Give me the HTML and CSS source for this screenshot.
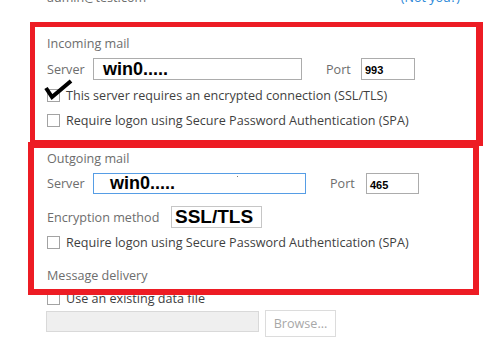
FILE: index.html
```html
<!DOCTYPE html>
<html>
<head>
    <meta charset="UTF-8">
    <link rel="stylesheet" href="styles.css">
</head>
<body>
    <div class="dialog">
        <div class="account-row">
            <span class="account">admin@test.com</span>
            <span class="not-you">(Not you?)</span>
        </div>

        <div class="section-title title-incoming">Incoming mail</div>
        <div class="field-row row-in-server">
            <span class="label label-server">Server</span>
            <div class="input server-input">win0.....</div>
            <span class="label label-port">Port</span>
            <div class="input port-input">993</div>
        </div>
        <div class="check-row row-ssl">
            <span class="checkbox"></span>
            <span class="check-text">This server requires an encrypted connection (SSL/TLS)</span>
        </div>
        <div class="check-row row-spa-in">
            <span class="checkbox"></span>
            <span class="check-text">Require logon using Secure Password Authentication (SPA)</span>
        </div>

        <div class="section-title title-outgoing">Outgoing mail</div>
        <div class="field-row row-out-server">
            <span class="label label-server">Server</span>
            <div class="input server-input out focused">win0.....<span class="speck"></span></div>
            <span class="label label-port out">Port</span>
            <div class="input port-input out">465</div>
        </div>
        <div class="field-row row-enc">
            <span class="label label-enc">Encryption method</span>
            <div class="enc-box">SSL/TLS</div>
        </div>
        <div class="check-row row-spa-out">
            <span class="checkbox"></span>
            <span class="check-text">Require logon using Secure Password Authentication (SPA)</span>
        </div>

        <div class="section-title title-delivery">Message delivery</div>
        <div class="check-row row-datafile">
            <span class="checkbox"></span>
            <span class="check-text">Use an existing data file</span>
        </div>
        <div class="file-row">
            <div class="file-input"></div>
            <div class="browse-btn">Browse...</div>
        </div>
    </div>

    <!-- annotations drawn over the dialog -->
    <div class="mark-box box-incoming"></div>
    <div class="mark-box box-outgoing"></div>
    <svg class="tick" width="30" height="24" viewBox="0 0 30 24">
        <path d="M2 10 L8 19 L27 3" fill="none" stroke="#000" stroke-width="4" stroke-linejoin="miter"/>
    </svg>
</body>
</html>
```

FILE: styles.css
```css
body {
    margin: 0;
    background: #fff;
    font-family: "Open Sans", "Noto Sans", Arial, sans-serif;
    font-size: 12.6px;
    color: #6d6d6d;
    overflow: hidden;
}
.dialog {
    padding-left: 47px;
}
.account-row {
    display: flex;
    justify-content: space-between;
    width: 413px;
    height: 16px;
    line-height: 16px;
    margin-top: -10px;
}
.account {
    color: #6d6d6d;
}
.not-you {
    color: #2b88d8;
}
.section-title {
    height: 16px;
    line-height: 16px;
}
.title-incoming { margin-top: 30px; }
.title-outgoing { margin-top: 21px; }
.title-delivery { margin-top: 16px; }

.field-row {
    display: flex;
    align-items: center;
}
.row-in-server { margin-top: 6px; height: 22px; }
.row-out-server { margin-top: 6px; height: 21px; }
.row-enc { margin-top: 12px; height: 22px; }

.label-server { width: 46px; }
.label-port { width: 35px; margin-left: 24px; }
.label-port.out { width: 36px; margin-left: 24px; }
.label-enc { width: 124px; }

.input {
    box-sizing: border-box;
    height: 100%;
    border: 1px solid #acacac;
    background: #fff;
    color: #000;
    font-family: "Liberation Sans", Arial, sans-serif;
    font-weight: bold;
    display: flex;
    align-items: center;
    position: relative;
}
.server-input {
    width: 209px;
    padding-left: 9px;
    font-size: 18px;
}
.server-input.out {
    width: 213px;
    padding-left: 16px;
}
.server-input.focused {
    border-color: #569de5;
}
.speck {
    position: absolute;
    left: 143px;
    top: 2px;
    width: 1px;
    height: 1px;
    background: #777;
}
.port-input {
    width: 54px;
    padding-left: 3px;
    padding-top: 2px;
    font-size: 11px;
}
.port-input.out {
    width: 53px;
}
.enc-box {
    box-sizing: border-box;
    width: 91px;
    height: 22px;
    border: 1px solid #c6c6c6;
    padding-left: 3px;
    color: #000;
    font-family: "Liberation Sans", Arial, sans-serif;
    font-weight: bold;
    font-size: 19px;
    line-height: 20px;
}

.check-row {
    display: flex;
    align-items: center;
    height: 20px;
}
.row-ssl { margin-top: 5px; }
.row-spa-in { margin-top: 5px; }
.row-spa-out { margin-top: 4px; }
.row-datafile { margin-top: 4px; }

.checkbox {
    box-sizing: border-box;
    width: 13px;
    height: 13px;
    border: 1px solid #a3a3a3;
    background: #fff;
    margin-right: 6px;
}
.check-text {
    color: #3f3f3f;
}

.file-row {
    display: flex;
    align-items: flex-start;
    gap: 6px;
    margin-top: 2px;
    margin-left: -1px;
}
.file-input {
    box-sizing: border-box;
    width: 213px;
    height: 21px;
    margin-top: 1px;
    background: #efefef;
    border: 1px solid #d9d9d9;
}
.browse-btn {
    box-sizing: border-box;
    width: 71px;
    height: 27px;
    border: 1px solid #dcdcdc;
    background: #fff;
    color: #a8a8a8;
    display: flex;
    align-items: center;
    justify-content: center;
}

.mark-box {
    position: absolute;
    box-sizing: border-box;
    border-style: solid;
    border-color: #ed1c24;
}
.box-incoming {
    left: 30px;
    top: 22px;
    width: 453px;
    height: 124px;
    border-width: 5px 7px 6px 5px;
}
.box-outgoing {
    left: 28px;
    top: 142px;
    width: 451px;
    height: 153px;
    border-width: 6px 6px 6px 6px;
}
.tick {
    position: absolute;
    left: 44px;
    top: 78px;
}
```
